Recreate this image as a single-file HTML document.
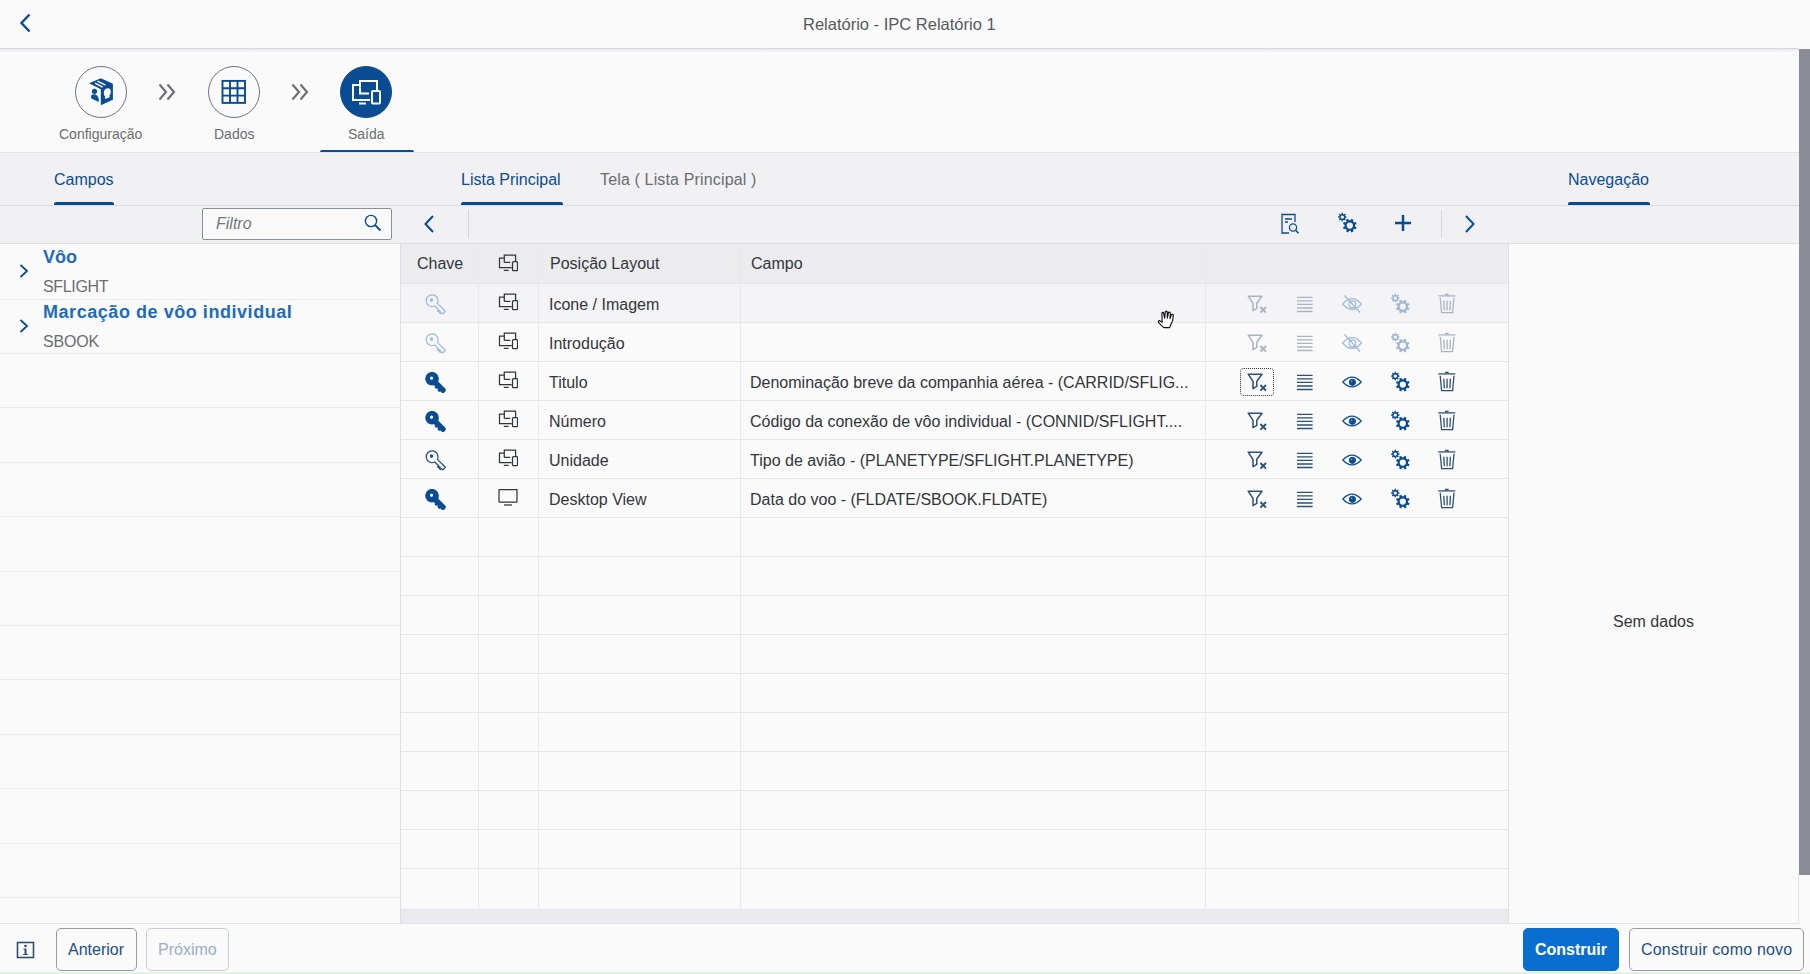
<!DOCTYPE html>
<html><head><meta charset="utf-8">
<style>
*{box-sizing:border-box;margin:0;padding:0}
html,body{width:1810px;height:974px;overflow:hidden;background:#fafafb;font-family:"Liberation Sans",sans-serif;color:#32363a}
.a{position:absolute}
.t{position:absolute;white-space:nowrap;line-height:1}
.circ{position:absolute;width:52px;height:52px;border-radius:50%;border:1px solid #6b7785;background:#fafafb}
.lbl{font-size:14px;color:#6a6d70}
.tab{font-size:16px;color:#0a4c92}
.uline{position:absolute;height:3px;background:#0a4c92;border-radius:2px 2px 0 0}
.btn{position:absolute;top:928px;height:43px;border:1px solid #979ca3;border-radius:5px;background:#fafafb}
.cell{font-size:16px;color:#32363a}
</style></head><body>
<svg width="0" height="0" style="position:absolute">
<defs>
<symbol id="keyF" viewBox="0 0 20 20"><circle cx="6.7" cy="6.4" r="6"/><path d="M9.4 6.6 L19.2 16.4 Q19.6 17.6 18.6 18.8 Q17.4 19.8 16.2 19.4 L14.6 17.8 L13.6 18.4 L12.4 17.2 L12.8 16 L11.8 15 L10.6 15.4 L9.6 14.4 L10 13.2 L6.4 9.6 Z"/><circle cx="6.2" cy="5.9" r="2" fill="#fafafb"/></symbol>
<symbol id="keyO" viewBox="0 0 20 20" overflow="visible"><path fill="none" stroke-width="1.2" stroke-linejoin="round" d="M11.82 8.88 L19.4 16.44 L16.84 18.98 L15.57 17.71 L14.65 18.63 L13.66 17.64 L14.58 16.72 L13.73 15.87 L12.81 16.79 L11.96 15.94 L12.88 15.02 L9.28 11.42 A5.6 5.6 0 1 1 11.82 8.88 Z"/><circle cx="6.2" cy="5.8" r="1.7" stroke="none"/></symbol>
<symbol id="devs" viewBox="0 0 20 20"><g fill="none" stroke-width="1.25"><path d="M6.3 9.4 V2.2 H17.6 V8.4"/><path d="M6.3 9.4 H12.3"/><path d="M6.3 5.1 H1.5 V14.5 H13.8"/><path d="M5.8 17.4 H10.6"/><rect x="14.5" y="8.5" width="5" height="9.2" rx="1"/></g></symbol>
<symbol id="mon" viewBox="0 0 20 20"><g fill="none" stroke-width="1.25"><rect x="1" y="2.5" width="18" height="12.5" rx="0.5"/><path d="M6 18 H14"/></g></symbol>
<symbol id="filt" viewBox="0 0 20 20"><g fill="none" stroke-width="1.5"><path d="M1.2 2.2 H15 L9.8 9.3 V14.4 L6 16.6 V9.3 Z" stroke-linejoin="round"/><path d="M13.4 13 L19 18.6 M19 13 L13.4 18.6" stroke-width="1.9"/></g></symbol>
<symbol id="list" viewBox="0 0 20 20"><g stroke-width="1.3"><path d="M2 3.3 H17.6 M2 6.9 H17.6 M2 10.4 H17.6 M2 14 H17.6 M2 17.5 H17.6"/></g></symbol>
<symbol id="eye" viewBox="0 0 20 20"><path d="M0.8 10 Q10 0.2 19.2 10 Q10 19.8 0.8 10 Z" fill="none" stroke-width="1.2"/><circle cx="10.4" cy="10.3" r="3.1"/><circle cx="9.6" cy="9.4" r="0.8" fill="#6fa0d8" stroke="none"/></symbol>
<symbol id="eyeOff" viewBox="0 0 20 20"><g fill="none" stroke-width="1.2"><path d="M0.6 10 Q10 -0.8 19.4 10 Q10 20.8 0.6 10 Z"/><circle cx="10.4" cy="10.2" r="3.4"/><path d="M2.5 1.5 L18 18.5"/></g></symbol>
<symbol id="gears" viewBox="0 0 20 20" overflow="visible"><path fill-rule="evenodd" stroke="none" d="M19.03 15.44 L20.62 16.18 L19.74 18.30 L18.10 17.71 L16.91 18.90 L17.50 20.54 L15.38 21.42 L14.64 19.83 L12.96 19.83 L12.22 21.42 L10.10 20.54 L10.69 18.90 L9.50 17.71 L7.86 18.30 L6.98 16.18 L8.57 15.44 L8.57 13.76 L6.98 13.02 L7.86 10.90 L9.50 11.49 L10.69 10.30 L10.10 8.66 L12.22 7.78 L12.96 9.37 L14.64 9.37 L15.38 7.78 L17.50 8.66 L16.91 10.30 L18.10 11.49 L19.74 10.90 L20.62 13.02 L19.03 13.76 Z M16.90 14.60 A3.1 3.1 0 1 0 10.70 14.60 A3.1 3.1 0 1 0 16.90 14.60 Z M9.41 5.36 L10.54 5.39 L10.54 6.81 L9.41 6.84 L9.02 7.78 L9.80 8.60 L8.80 9.60 L7.98 8.82 L7.04 9.21 L7.01 10.34 L5.59 10.34 L5.56 9.21 L4.62 8.82 L3.80 9.60 L2.80 8.60 L3.58 7.78 L3.19 6.84 L2.06 6.81 L2.06 5.39 L3.19 5.36 L3.58 4.42 L2.80 3.60 L3.80 2.60 L4.62 3.38 L5.56 2.99 L5.59 1.86 L7.01 1.86 L7.04 2.99 L7.98 3.38 L8.80 2.60 L9.80 3.60 L9.02 4.42 Z M8.00 6.10 A1.7 1.7 0 1 0 4.60 6.10 A1.7 1.7 0 1 0 8.00 6.10 Z"/></symbol>
<symbol id="trash" viewBox="0 0 20 20" overflow="visible"><g fill="none" stroke-width="1.3"><path d="M1.3 1.9 H18.3"/><path d="M8 0.5 H11.6" stroke-width="1.5"/><path d="M3.2 3.8 L4.6 18.7 H15.6 L17 3.8"/><path d="M6.8 6.8 L7.3 16.2 M10.1 6.8 V16.2 M13.4 6.8 L12.9 16.2"/></g></symbol>
</defs></svg>
<div class="a" style="left:0;top:48px;width:1799px;height:1px;background:#d6d6de"></div>
<div class="a" style="left:0;top:49px;width:1799px;height:3px;background:linear-gradient(#e4e4ec,#fafafb)"></div>
<svg class="a" style="left:18px;top:12px" width="16" height="22" viewBox="0 0 16 22"><path d="M11.5 2.5 L3.5 11 L11.5 19.5" fill="none" stroke="#0a4c92" stroke-width="2.4"/></svg>
<div class="t" style="left:803px;top:15.5px;font-size:16.5px;color:#55595d">Relatório - IPC Relatório 1</div>
<div class="circ" style="left:75px;top:66px"></div>
<div class="circ" style="left:208px;top:66px"></div>
<div class="circ" style="left:340px;top:66px;background:#0a4c92;border-color:#0a4c92"></div>
<div class="t lbl" style="left:59px;top:127px">Configuração</div>
<div class="t lbl" style="left:214px;top:127px">Dados</div>
<div class="t lbl" style="left:348px;top:127px">Saída</div>
<svg class="a" style="left:88px;top:76px" width="28" height="32" viewBox="0 0 28 32">
<path fill="#0a4c92" d="M1.1 7.3 L12.8 2.2 L24.9 7.7 L24.9 23.7 L12.8 29.2 L12.8 13.2 Z"/>
<path fill="none" stroke="#fafafb" stroke-width="1.4" d="M9.5 5.2 L17.5 9.2 M7 7.2 L14.6 11"/>
<path fill="#fafafb" d="M15.8 16.5 Q16 12.8 19.5 12.2 Q22.6 12 22.8 15.5 Q22.9 18 21.5 19.2 L21.6 21.2 L17.2 23 L17 20.5 Q15.7 19.4 15.8 16.5 Z"/>
<circle fill="#0a4c92" cx="6.5" cy="15.3" r="2.6"/>
<path fill="#0a4c92" d="M3.2 19.5 Q5 17.8 7.5 18.6 Q10.8 20 10.8 24.5 L10.8 26 L3.5 22.5 Q2.6 21 3.2 19.5 Z"/>
</svg>
<svg class="a" style="left:221px;top:79px" width="26" height="26" viewBox="0 0 26 26"><g fill="none" stroke="#0a4c92" stroke-width="1.9"><rect x="1.5" y="1.9" width="22.5" height="22"/><path d="M9 1.9 V23.9 M16.5 1.9 V23.9 M1.5 9.3 H24 M1.5 16.6 H24"/></g></svg>
<svg class="a" style="left:350px;top:78px" width="34" height="30" viewBox="0 0 34 30"><g fill="none" stroke="#fff" stroke-width="2"><path d="M10 9.5 V3 H27 V12"/><path d="M10 9.5 V15.5 H19"/><path d="M10 7 H3 V22 H20"/><path d="M9 25.5 H16"/><rect x="22" y="13" width="8" height="12.5" rx="1"/></g></svg>
<svg class="a" style="left:158px;top:83px" width="19" height="18" viewBox="0 0 19 18"><g fill="none" stroke="#6a6d70" stroke-width="2.1"><path d="M1.5 1.5 L8 9 L1.5 16.5 M9.5 1.5 L16 9 L9.5 16.5"/></g></svg>
<svg class="a" style="left:291px;top:83px" width="19" height="18" viewBox="0 0 19 18"><g fill="none" stroke="#6a6d70" stroke-width="2.1"><path d="M1.5 1.5 L8 9 L1.5 16.5 M9.5 1.5 L16 9 L9.5 16.5"/></g></svg>
<div class="uline" style="left:320px;top:150px;width:94px"></div>
<div class="a" style="left:0;top:152px;width:1799px;height:92px;background:#f1f1f3"></div>
<div class="a" style="left:0;top:152px;width:1799px;height:1px;background:#e0e0e6"></div>
<div class="a" style="left:0;top:205px;width:1799px;height:1px;background:#dcdce2"></div>
<div class="a" style="left:0;top:243px;width:1799px;height:1px;background:#dcdce2"></div>
<div class="t tab" style="left:54px;top:172px">Campos</div>
<div class="uline" style="left:54px;top:202px;width:60px"></div>
<div class="t tab" style="left:461px;top:172px">Lista Principal</div>
<div class="uline" style="left:461px;top:202px;width:102px"></div>
<div class="t tab" style="left:600px;top:172px;color:#6a6d70;letter-spacing:0.15px">Tela ( Lista Principal )</div>
<div class="t tab" style="left:1568px;top:172px">Navegação</div>
<div class="uline" style="left:1568px;top:202px;width:82px"></div>
<div class="a" style="left:202px;top:208px;width:190px;height:32px;background:#fafafb;border:1px solid #89919a;border-radius:2px"></div>
<div class="t" style="left:216px;top:215.5px;font-size:16px;font-style:italic;color:#74777a">Filtro</div>
<svg class="a" style="left:364px;top:214px" width="18" height="18" viewBox="0 0 18 18"><circle cx="7" cy="7" r="5.6" fill="none" stroke="#0a4c92" stroke-width="1.4"/><path d="M11 11 L16.5 16.5" stroke="#0a4c92" stroke-width="1.8"/></svg>
<svg class="a" style="left:421px;top:214px" width="16" height="20" viewBox="0 0 16 20"><path d="M12 2 L4.5 10 L12 18" fill="none" stroke="#0a4c92" stroke-width="2"/></svg>
<div class="a" style="left:468px;top:210px;width:1px;height:28px;background:#d4d4da"></div>
<svg class="a" style="left:1280px;top:213px" width="20" height="22" viewBox="0 0 20 22"><g fill="none" stroke="#0a4c92" stroke-width="1.3"><path d="M9 20 H2 V1.5 H15 V9"/><path d="M5 6 H12 M5 9 H8"/><circle cx="13" cy="14.5" r="3.6"/><path d="M15.6 17.2 L18.5 20.3" stroke-width="1.6"/></g></svg>
<svg class="a" style="left:1336px;top:211px;overflow:visible" width="20" height="20"><use href="#gears" fill="#0a4c92"/></svg>
<svg class="a" style="left:1394px;top:214px" width="18" height="18" viewBox="0 0 18 18"><path d="M9 1 V17 M1 9 H17" stroke="#0a4c92" stroke-width="2.5"/></svg>
<div class="a" style="left:1441px;top:210px;width:1px;height:28px;background:#d4d4da"></div>
<svg class="a" style="left:1462px;top:214px" width="16" height="20" viewBox="0 0 16 20"><path d="M4 2 L11.5 10 L4 18" fill="none" stroke="#0a4c92" stroke-width="2"/></svg>
<div class="a" style="left:400px;top:244px;width:1px;height:679px;background:#dedee4"></div>
<div class="a" style="left:0;top:299px;width:400px;height:1px;background:#ebebef"></div>
<div class="a" style="left:0;top:353px;width:400px;height:1px;background:#ebebef"></div>
<div class="a" style="left:0;top:407px;width:400px;height:1px;background:#ebebef"></div>
<div class="a" style="left:0;top:462px;width:400px;height:1px;background:#ebebef"></div>
<div class="a" style="left:0;top:516px;width:400px;height:1px;background:#ebebef"></div>
<div class="a" style="left:0;top:571px;width:400px;height:1px;background:#ebebef"></div>
<div class="a" style="left:0;top:625px;width:400px;height:1px;background:#ebebef"></div>
<div class="a" style="left:0;top:679px;width:400px;height:1px;background:#ebebef"></div>
<div class="a" style="left:0;top:734px;width:400px;height:1px;background:#ebebef"></div>
<div class="a" style="left:0;top:788px;width:400px;height:1px;background:#ebebef"></div>
<div class="a" style="left:0;top:843px;width:400px;height:1px;background:#ebebef"></div>
<div class="a" style="left:0;top:897px;width:400px;height:1px;background:#ebebef"></div>
<svg class="a" style="left:17px;top:263px" width="14" height="16" viewBox="0 0 14 16"><path d="M3.5 2 L10 8 L3.5 14" fill="none" stroke="#0a4c92" stroke-width="1.8"/></svg>
<svg class="a" style="left:17px;top:318px" width="14" height="16" viewBox="0 0 14 16"><path d="M3.5 2 L10 8 L3.5 14" fill="none" stroke="#0a4c92" stroke-width="1.8"/></svg>
<div class="t" style="left:43px;top:247.5px;font-size:18px;font-weight:bold;color:#1d6cbc">Vôo</div>
<div class="t" style="left:43px;top:279px;font-size:16px;color:#6a6d70;letter-spacing:-0.35px">SFLIGHT</div>
<div class="t" style="left:43px;top:302.5px;font-size:18px;font-weight:bold;color:#1d6cbc;letter-spacing:0.55px">Marcação de vôo individual</div>
<div class="t" style="left:43px;top:334px;font-size:16px;color:#6a6d70;letter-spacing:-0.2px">SBOOK</div>
<div class="a" style="left:401px;top:244px;width:1107px;height:40px;background:#ececef"></div>
<div class="a" style="left:401px;top:284px;width:1107px;height:39px;background:#f4f4f6"></div>
<div class="a" style="left:401px;top:283px;width:1107px;height:1px;background:#e6e6ea"></div>
<div class="a" style="left:401px;top:322px;width:1107px;height:1px;background:#e6e6ea"></div>
<div class="a" style="left:401px;top:361px;width:1107px;height:1px;background:#e6e6ea"></div>
<div class="a" style="left:401px;top:400px;width:1107px;height:1px;background:#e6e6ea"></div>
<div class="a" style="left:401px;top:439px;width:1107px;height:1px;background:#e6e6ea"></div>
<div class="a" style="left:401px;top:478px;width:1107px;height:1px;background:#e6e6ea"></div>
<div class="a" style="left:401px;top:517px;width:1107px;height:1px;background:#e6e6ea"></div>
<div class="a" style="left:401px;top:556px;width:1107px;height:1px;background:#e6e6ea"></div>
<div class="a" style="left:401px;top:595px;width:1107px;height:1px;background:#e6e6ea"></div>
<div class="a" style="left:401px;top:634px;width:1107px;height:1px;background:#e6e6ea"></div>
<div class="a" style="left:401px;top:673px;width:1107px;height:1px;background:#e6e6ea"></div>
<div class="a" style="left:401px;top:712px;width:1107px;height:1px;background:#e6e6ea"></div>
<div class="a" style="left:401px;top:751px;width:1107px;height:1px;background:#e6e6ea"></div>
<div class="a" style="left:401px;top:790px;width:1107px;height:1px;background:#e6e6ea"></div>
<div class="a" style="left:401px;top:829px;width:1107px;height:1px;background:#e6e6ea"></div>
<div class="a" style="left:401px;top:868px;width:1107px;height:1px;background:#e6e6ea"></div>
<div class="a" style="left:478px;top:244px;width:1px;height:665px;background:#e9e9ed"></div>
<div class="a" style="left:538px;top:244px;width:1px;height:665px;background:#e9e9ed"></div>
<div class="a" style="left:740px;top:244px;width:1px;height:665px;background:#e9e9ed"></div>
<div class="a" style="left:1205px;top:244px;width:1px;height:665px;background:#e9e9ed"></div>
<div class="a" style="left:401px;top:909px;width:1107px;height:14px;background:#ebebef;border-top:1px solid #e2e2e8"></div>
<div class="a" style="left:1508px;top:244px;width:1px;height:679px;background:#dedee4"></div>
<div class="a" style="left:1798px;top:875px;width:1px;height:48px;background:#e4e4ea"></div>
<div class="t cell" style="left:417px;top:256.2px">Chave</div>
<svg class="a" style="left:498px;top:253px" width="20" height="20"><use href="#devs" stroke="#32363a"/></svg>
<div class="t cell" style="left:550px;top:256.2px">Posição Layout</div>
<div class="t cell" style="left:751px;top:256.2px">Campo</div>
<svg class="a" style="left:425px;top:293.5px;overflow:visible" width="21" height="21"><use href="#keyO" width="21" height="21" fill="#9dbbdc" stroke="#9dbbdc"/></svg>
<svg class="a" style="left:498px;top:292px" width="20" height="20"><use href="#devs" stroke="#32363a"/></svg>
<div class="t cell" style="left:549px;top:296.5px">Icone / Imagem</div>
<svg class="a" style="left:1247px;top:294px;overflow:visible" width="20" height="20"><use href="#filt" fill="#a9b4c0" stroke="#a9b4c0"/></svg>
<svg class="a" style="left:1295px;top:294px;overflow:visible" width="20" height="20"><use href="#list" fill="#a9b4c0" stroke="#a9b4c0"/></svg>
<svg class="a" style="left:1342px;top:294px;overflow:visible" width="20" height="20"><use href="#eyeOff" fill="#9fb8d4" stroke="#9fb8d4"/></svg>
<svg class="a" style="left:1389px;top:292px;overflow:visible" width="20" height="20"><use href="#gears" fill="#9fb8d4" stroke="#9fb8d4"/></svg>
<svg class="a" style="left:1437px;top:294px;overflow:visible" width="20" height="20"><use href="#trash" fill="#a9b4c0" stroke="#a9b4c0"/></svg>
<svg class="a" style="left:425px;top:332.5px;overflow:visible" width="21" height="21"><use href="#keyO" width="21" height="21" fill="#9dbbdc" stroke="#9dbbdc"/></svg>
<svg class="a" style="left:498px;top:331px" width="20" height="20"><use href="#devs" stroke="#32363a"/></svg>
<div class="t cell" style="left:549px;top:335.5px">Introdução</div>
<svg class="a" style="left:1247px;top:333px;overflow:visible" width="20" height="20"><use href="#filt" fill="#a9b4c0" stroke="#a9b4c0"/></svg>
<svg class="a" style="left:1295px;top:333px;overflow:visible" width="20" height="20"><use href="#list" fill="#a9b4c0" stroke="#a9b4c0"/></svg>
<svg class="a" style="left:1342px;top:333px;overflow:visible" width="20" height="20"><use href="#eyeOff" fill="#9fb8d4" stroke="#9fb8d4"/></svg>
<svg class="a" style="left:1389px;top:331px;overflow:visible" width="20" height="20"><use href="#gears" fill="#9fb8d4" stroke="#9fb8d4"/></svg>
<svg class="a" style="left:1437px;top:333px;overflow:visible" width="20" height="20"><use href="#trash" fill="#a9b4c0" stroke="#a9b4c0"/></svg>
<svg class="a" style="left:425px;top:371.5px;overflow:visible" width="21" height="21"><use href="#keyF" width="21" height="21" fill="#0a4c92" stroke="#0a4c92"/></svg>
<svg class="a" style="left:498px;top:370px" width="20" height="20"><use href="#devs" stroke="#32363a"/></svg>
<div class="t cell" style="left:549px;top:374.5px">Titulo</div>
<div class="t cell" style="left:750px;top:374.5px">Denominação breve da companhia aérea - (CARRID/SFLIG...</div>
<svg class="a" style="left:1247px;top:372px;overflow:visible" width="20" height="20"><use href="#filt" fill="#2d5077" stroke="#2d5077"/></svg>
<svg class="a" style="left:1295px;top:372px;overflow:visible" width="20" height="20"><use href="#list" fill="#2d5077" stroke="#2d5077"/></svg>
<svg class="a" style="left:1342px;top:372px;overflow:visible" width="20" height="20"><use href="#eye" fill="#0a4c92" stroke="#0a4c92"/></svg>
<svg class="a" style="left:1389px;top:370px;overflow:visible" width="20" height="20"><use href="#gears" fill="#0a4c92" stroke="#0a4c92"/></svg>
<svg class="a" style="left:1437px;top:372px;overflow:visible" width="20" height="20"><use href="#trash" fill="#2d5077" stroke="#2d5077"/></svg>
<svg class="a" style="left:425px;top:410.5px;overflow:visible" width="21" height="21"><use href="#keyF" width="21" height="21" fill="#0a4c92" stroke="#0a4c92"/></svg>
<svg class="a" style="left:498px;top:409px" width="20" height="20"><use href="#devs" stroke="#32363a"/></svg>
<div class="t cell" style="left:549px;top:413.5px">Número</div>
<div class="t cell" style="left:750px;top:413.5px">Código da conexão de vôo individual - (CONNID/SFLIGHT....</div>
<svg class="a" style="left:1247px;top:411px;overflow:visible" width="20" height="20"><use href="#filt" fill="#2d5077" stroke="#2d5077"/></svg>
<svg class="a" style="left:1295px;top:411px;overflow:visible" width="20" height="20"><use href="#list" fill="#2d5077" stroke="#2d5077"/></svg>
<svg class="a" style="left:1342px;top:411px;overflow:visible" width="20" height="20"><use href="#eye" fill="#0a4c92" stroke="#0a4c92"/></svg>
<svg class="a" style="left:1389px;top:409px;overflow:visible" width="20" height="20"><use href="#gears" fill="#0a4c92" stroke="#0a4c92"/></svg>
<svg class="a" style="left:1437px;top:411px;overflow:visible" width="20" height="20"><use href="#trash" fill="#2d5077" stroke="#2d5077"/></svg>
<svg class="a" style="left:425px;top:449.5px;overflow:visible" width="21" height="21"><use href="#keyO" width="21" height="21" fill="#2c4f78" stroke="#2c4f78"/></svg>
<svg class="a" style="left:498px;top:448px" width="20" height="20"><use href="#devs" stroke="#32363a"/></svg>
<div class="t cell" style="left:549px;top:452.5px">Unidade</div>
<div class="t cell" style="left:750px;top:452.5px">Tipo de avião - (PLANETYPE/SFLIGHT.PLANETYPE)</div>
<svg class="a" style="left:1247px;top:450px;overflow:visible" width="20" height="20"><use href="#filt" fill="#2d5077" stroke="#2d5077"/></svg>
<svg class="a" style="left:1295px;top:450px;overflow:visible" width="20" height="20"><use href="#list" fill="#2d5077" stroke="#2d5077"/></svg>
<svg class="a" style="left:1342px;top:450px;overflow:visible" width="20" height="20"><use href="#eye" fill="#0a4c92" stroke="#0a4c92"/></svg>
<svg class="a" style="left:1389px;top:448px;overflow:visible" width="20" height="20"><use href="#gears" fill="#0a4c92" stroke="#0a4c92"/></svg>
<svg class="a" style="left:1437px;top:450px;overflow:visible" width="20" height="20"><use href="#trash" fill="#2d5077" stroke="#2d5077"/></svg>
<svg class="a" style="left:425px;top:488.5px;overflow:visible" width="21" height="21"><use href="#keyF" width="21" height="21" fill="#0a4c92" stroke="#0a4c92"/></svg>
<svg class="a" style="left:498px;top:487px" width="20" height="20"><use href="#mon" stroke="#32363a"/></svg>
<div class="t cell" style="left:549px;top:491.5px">Desktop View</div>
<div class="t cell" style="left:750px;top:491.5px">Data do voo - (FLDATE/SBOOK.FLDATE)</div>
<svg class="a" style="left:1247px;top:489px;overflow:visible" width="20" height="20"><use href="#filt" fill="#2d5077" stroke="#2d5077"/></svg>
<svg class="a" style="left:1295px;top:489px;overflow:visible" width="20" height="20"><use href="#list" fill="#2d5077" stroke="#2d5077"/></svg>
<svg class="a" style="left:1342px;top:489px;overflow:visible" width="20" height="20"><use href="#eye" fill="#0a4c92" stroke="#0a4c92"/></svg>
<svg class="a" style="left:1389px;top:487px;overflow:visible" width="20" height="20"><use href="#gears" fill="#0a4c92" stroke="#0a4c92"/></svg>
<svg class="a" style="left:1437px;top:489px;overflow:visible" width="20" height="20"><use href="#trash" fill="#2d5077" stroke="#2d5077"/></svg>
<div class="a" style="left:1240px;top:368px;width:34px;height:28px;border:1px dotted #32363a;border-radius:4px"></div>
<svg class="a" style="left:1157px;top:310px" width="19" height="19" viewBox="0 0 19 19"><path d="M6.8 17.6 L1.6 12.6 Q0.9 11.2 2.3 10.6 L5.2 12.2 L4.9 3.2 Q5.4 1.9 6.5 2.6 L7.6 8.2 L8.3 1.6 Q9.3 0.6 10.2 1.6 L10.3 8.1 L11.5 2.3 Q12.6 1.6 13.3 2.7 L13 8.6 L14.4 4.6 Q15.7 4 16.3 5.2 L15.7 10.6 L13.4 15.6 L12.6 17.6 Z" fill="#fff" stroke="#111" stroke-width="1.15" stroke-linejoin="round"/></svg>
<div class="t" style="left:1613px;top:614px;font-size:16px;color:#32363a">Sem dados</div>
<div class="a" style="left:1799px;top:49px;width:11px;height:826px;background:#8c8c96"></div>
<div class="a" style="left:0;top:923px;width:1799px;height:1px;background:#e2e2e8"></div>
<svg class="a" style="left:16px;top:941px" width="19" height="18" viewBox="0 0 19 18"><rect x="1.5" y="1.5" width="16" height="15" fill="none" stroke="#32506e" stroke-width="1.6"/><circle cx="9.5" cy="5" r="1.3" fill="#32506e"/><path d="M7.5 7.5 H10.5 V13 H12 V14 H7 V13 H8.5 V8.5 H7.5 Z" fill="#32506e"/></svg>
<div class="btn" style="left:56px;width:81px"></div>
<div class="t" style="left:68px;top:942px;font-size:16px;color:#1b4f86">Anterior</div>
<div class="btn" style="left:146px;width:83px;border-color:#c9ced4"></div>
<div class="t" style="left:158px;top:942px;font-size:16px;color:#9ab0c8">Próximo</div>
<div class="btn" style="left:1523px;width:96px;background:#0a6ed1;border-color:#0a6ed1"></div>
<div class="t" style="left:1535px;top:942px;font-size:16px;font-weight:bold;color:#fff">Construir</div>
<div class="btn" style="left:1629px;width:175px"></div>
<div class="t" style="left:1641px;top:942px;font-size:16px;color:#1b4f86;letter-spacing:0.2px">Construir como novo</div>
<div class="a" style="left:0;top:972px;width:1810px;height:2px;background:#e4f2e6"></div>
</body></html>
